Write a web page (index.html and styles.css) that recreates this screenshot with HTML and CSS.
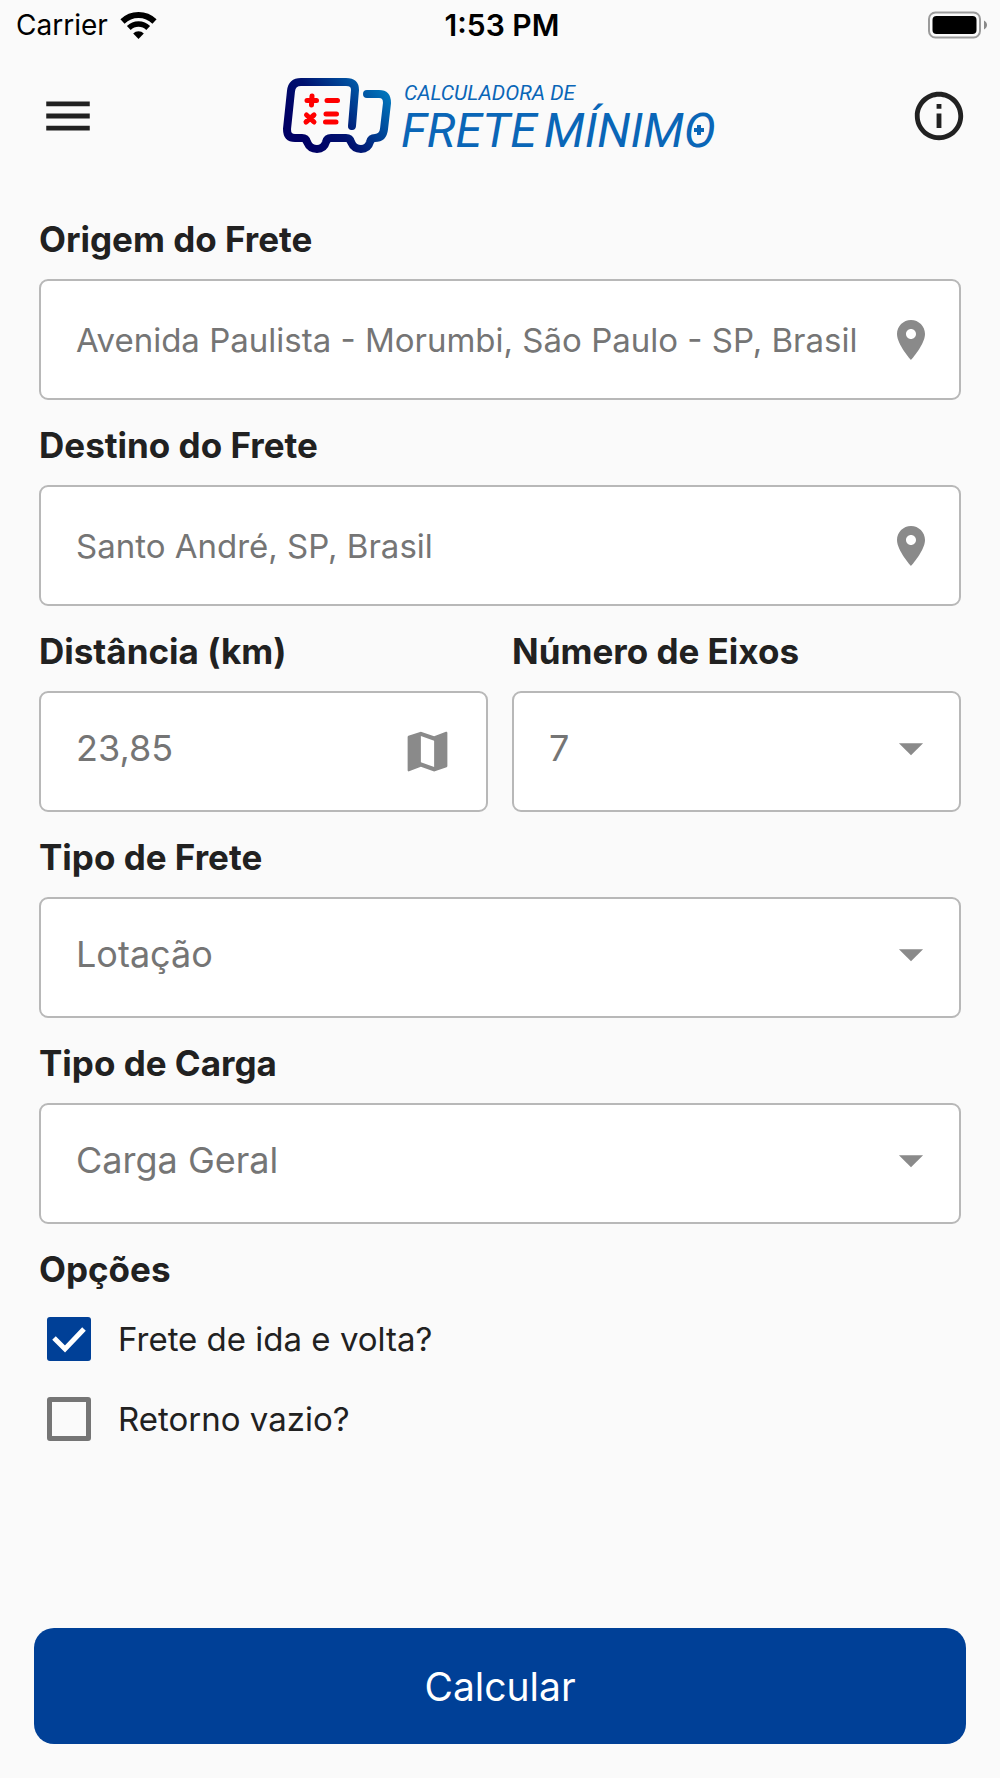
FILE: index.html
```
<!DOCTYPE html>
<html lang="pt-BR">
<head>
  <meta charset="UTF-8">
  <meta name="viewport" content="width=device-width, initial-scale=1.0">
  <title>Calculadora de Frete Mínimo</title>
  <link rel="stylesheet" href="styles.css">
</head>
<body>
  <div class="status-bar">
    <div class="status-left">
      <span>Carrier</span>
      <svg class="wifi" viewBox="0 0 37 27" aria-hidden="true">
        <path d="M2.5 9.5a23 23 0 0 1 32 0" fill="none" stroke="#000" stroke-width="6"/>
        <path d="M8.800 16a14 14 0 0 1 19.400 0" fill="none" stroke="#000" stroke-width="5.500"/>
        <path d="M18.500 27l-5.300-5.500a7.500 7.500 0 0 1 10.600 0z"/>
      </svg>
    </div>
    <div class="status-time">1:53 PM</div>
    <div class="status-right">
      <svg class="battery" viewBox="0 0 60 28" aria-hidden="true">
        <rect x="1" y="1.500" width="51" height="25" rx="6.500" fill="none" stroke="#9b9b9b" stroke-width="2"/>
        <rect x="4.500" y="5" width="44" height="18" rx="4"/>
        <path d="M56 9.500c4 2 4 7 0 9z" fill="#8a8a8a"/>
      </svg>
    </div>
  </div>

  <header class="header">
    <button type="button" class="icon-button" aria-label="Menu">
      <svg viewBox="0 0 24 24"><path d="M3 18h18v-2H3v2zm0-5h18v-2H3v2zm0-7v2h18V6H3z"/></svg>
    </button>

    <svg class="logo" viewBox="0 -5 444 90" role="img" aria-label="Calculadora de Frete Mínimo">
      <defs>
        <linearGradient id="truck" gradientUnits="userSpaceOnUse" x1="25" y1="66" x2="100" y2="8">
          <stop offset="0" stop-color="#000064"/>
          <stop offset="0.350" stop-color="#00116f"/>
          <stop offset="1" stop-color="#0078be"/>
        </linearGradient>
      </defs>
      <path d="M70 50L73 14Q73 6 64 6H19Q10 6 9 15L5 53Q5 62 13 62H20Q24 62 25 66Q28 73 35 73Q42 73 44 66Q45 62 49 62H64Q68 62 69 66Q72 73 79 73Q86 73 88 66Q89 62 93 62Q101 62 102 53L105 27Q105 18 97 18H85" fill="none" stroke="url(#truck)" stroke-width="8" stroke-linecap="round" stroke-linejoin="round"/>
      <path d="M25 24.500h9.500M30 20l-.5 9M45 24.500h10.500M24.500 39l7.500 7M32 39l-8 7M44 38h10.500M43.500 46H54" fill="none" stroke="#f00" stroke-width="5" stroke-linecap="round"/>
      <text class="logo-small" x="122" y="24">CALCULADORA DE</text>
      <text class="logo-big" x="119" y="71">FRETE</text>
      <text class="logo-big" x="262" y="71">MÍNIMO</text>
      <path d="M412 54h10M417 49v10" stroke="#0a66b7" stroke-width="4"/>
    </svg>

    <button type="button" class="icon-button" aria-label="Informações">
      <svg viewBox="0 0 24 24"><path d="M11 7h2v2h-2zm0 4h2v6h-2zm1-9C6.480 2 2 6.480 2 12s4.480 10 10 10 10-4.480 10-10S17.520 2 12 2zm0 18c-4.410 0-8-3.590-8-8s3.590-8 8-8 8 3.590 8 8-3.590 8-8 8z"/></svg>
    </button>
  </header>

  <form id="freteForm" class="form">
    <div class="form-group">
      <label for="origem">Origem do Frete</label>
      <div class="field">
        <input type="text" id="origem" value="Avenida Paulista - Morumbi, São Paulo - SP, Brasil">
        <svg class="icon-pin" viewBox="0 0 24 24"><path d="M12 2C8.130 2 5 5.130 5 9c0 5.250 7 13 7 13s7-7.750 7-13c0-3.870-3.130-7-7-7zm0 9.500c-1.380 0-2.500-1.120-2.500-2.500s1.120-2.500 2.500-2.500 2.500 1.120 2.500 2.500-1.120 2.500-2.500 2.500z"/></svg>
      </div>
    </div>

    <div class="form-group">
      <label for="destino">Destino do Frete</label>
      <div class="field">
        <input type="text" id="destino" value="Santo André, SP, Brasil">
        <svg class="icon-pin" viewBox="0 0 24 24"><path d="M12 2C8.130 2 5 5.130 5 9c0 5.250 7 13 7 13s7-7.750 7-13c0-3.870-3.130-7-7-7zm0 9.500c-1.380 0-2.500-1.120-2.500-2.500s1.120-2.500 2.500-2.500 2.500 1.120 2.500 2.500-1.120 2.500-2.500 2.500z"/></svg>
      </div>
    </div>

    <div class="form-row">
      <div class="form-group">
        <label for="distancia">Distância (km)</label>
        <div class="field field-large">
          <input type="text" id="distancia" inputmode="decimal" value="23,85">
          <svg class="icon-map" viewBox="0 0 24 24"><path d="M20.500 3l-.160.030L15 5.100 9 3 3.360 4.900c-.210.070-.360.250-.360.480V20.500c0 .280.220.5.5.5l.160-.030L9 18.900l6 2.100 5.640-1.900c.210-.070.360-.250.360-.480V3.500c0-.280-.220-.5-.5-.5zM15 19l-6-2.110V5l6 2.110V19z"/></svg>
        </div>
      </div>

      <div class="form-group">
        <label for="eixos">Número de Eixos</label>
        <div class="field field-large">
          <select id="eixos">
            <option>2</option>
            <option>3</option>
            <option>4</option>
            <option>5</option>
            <option>6</option>
            <option selected>7</option>
            <option>9</option>
          </select>
          <svg class="icon-arrow" viewBox="0 0 24 24"><path d="M7 10l5 5 5-5z"/></svg>
        </div>
      </div>
    </div>

    <div class="form-group">
      <label for="tipoFrete">Tipo de Frete</label>
      <div class="field field-large">
        <select id="tipoFrete">
          <option selected>Lotação</option>
        </select>
        <svg class="icon-arrow" viewBox="0 0 24 24"><path d="M7 10l5 5 5-5z"/></svg>
      </div>
    </div>

    <div class="form-group">
      <label for="tipoCarga">Tipo de Carga</label>
      <div class="field field-large">
        <select id="tipoCarga">
          <option selected>Carga Geral</option>
        </select>
        <svg class="icon-arrow" viewBox="0 0 24 24"><path d="M7 10l5 5 5-5z"/></svg>
      </div>
    </div>

    <fieldset class="options">
      <legend>Opções</legend>
      <label class="option">
        <input type="checkbox" id="idaVolta" checked>
        <span>Frete de ida e volta?</span>
      </label>
      <label class="option">
        <input type="checkbox" id="retornoVazio">
        <span>Retorno vazio?</span>
      </label>
    </fieldset>

    <button type="submit" class="submit">Calcular</button>
  </form>
</body>
</html>
```
FILE: styles.css
```
* {
  box-sizing: border-box;
}

body {
  font-family: Inter, "Liberation Sans", sans-serif;
  background-color: #fafafa;
  color: #212121;
  margin: 0;
  display: flex;
  flex-direction: column;
  min-height: 100vh;
}

/* Status bar */
.status-bar {
  display: grid;
  grid-template-columns: 1fr auto 1fr;
  align-items: center;
  height: 50px;
  padding: 0 12px 0 16px;
  font-size: 28px;
  color: #000;
}

.status-left {
  display: flex;
  align-items: center;
  gap: 12px;
}

.status-time {
  font-size: 30px;
  font-weight: 600;
}

.status-right {
  display: flex;
  justify-content: flex-end;
}

.wifi {
  width: 37px;
  height: 27px;
}

.battery {
  width: 60px;
  height: 28px;
}

/* Header */
.header {
  display: flex;
  justify-content: space-between;
  align-items: center;
  padding: 21px 32px 0 39px;
}

.icon-button {
  width: 58px;
  height: 58px;
  padding: 0;
  border: none;
  background: none;
  cursor: pointer;
}

.icon-button svg {
  display: block;
  width: 58px;
  height: 58px;
  fill: #212121;
}

.logo {
  width: 444px;
  height: 90px;
}

.logo-small,
.logo-big {
  font-family: Roboto, sans-serif;
  font-style: italic;
  fill: #0a66b7;
}

.logo-small {
  font-size: 21px;
}

.logo-big {
  font-size: 48px;
}

/* Form */
.form {
  flex: 1;
  display: flex;
  flex-direction: column;
  padding: 54px 34px 34px;
}

.form-row,
.form > .form-group,
.options {
  margin: 0 5px;
}

.form-row {
  display: grid;
  grid-template-columns: 1fr 1fr;
  gap: 24px;
}

.form-group {
  min-width: 0;
  padding-bottom: 21px;
}

.form-group > label,
.options legend {
  display: block;
  padding: 0;
  margin-bottom: 16px;
  font-size: 35px;
  font-weight: 700;
  line-height: 48px;
}

.options legend {
  margin-bottom: 6px;
}

.field {
  position: relative;
  display: flex;
  align-items: center;
  height: 121px;
  background-color: white;
  border: 2px solid #b8b8b8;
  border-radius: 9px;
}

.field input,
.field select {
  flex: 1;
  min-width: 0;
  width: 100%;
  height: 100%;
  padding: 0 0 0 35px;
  border: none;
  border-radius: 7px;
  outline: none;
  background: none;
  appearance: none;
  font-family: inherit;
  font-size: 33px;
  color: #757575;
}

.field-large input,
.field-large select {
  padding-bottom: 8px;
  font-size: 36px;
}

.field svg {
  flex: none;
  fill: #8a8a8a;
}

.icon-pin {
  width: 48px;
  height: 48px;
  margin-right: 24px;
}

.icon-map {
  width: 53px;
  height: 53px;
  margin-right: 32px;
}

/* the arrow lies over the select */
.icon-arrow {
  position: absolute;
  top: 26px;
  right: 19px;
  width: 58px;
  height: 58px;
  pointer-events: none;
}

/* Options */
.options {
  padding: 0;
  border: none;
}

.option {
  display: flex;
  align-items: center;
  gap: 27px;
  height: 80px;
  padding-left: 8px;
  font-size: 33px;
}

.option input {
  flex: none;
  width: 44px;
  height: 44px;
  margin: 0;
  appearance: none;
  border: 5px solid #757575;
  border-radius: 3px;
}

.option input:checked {
  border: none;
  background: #004097 url("data:image/svg+xml,%3Csvg xmlns='http://www.w3.org/2000/svg' viewBox='0 0 44 44'%3E%3Cpath d='M7 21l11 11 19-20' fill='none' stroke='white' stroke-width='5'/%3E%3C/svg%3E") no-repeat center;
}

.submit {
  margin-top: auto;
  height: 116px;
  border: none;
  border-radius: 20px;
  background-color: #004097;
  color: white;
  font-family: inherit;
  font-size: 39px;
  cursor: pointer;
}

.submit:hover {
  background-color: #00377f;
}

@media (max-width: 600px) {
  .logo {
    width: 50%;
  }

  .form-row {
    grid-template-columns: 1fr;
    gap: 0;
  }
}
```
